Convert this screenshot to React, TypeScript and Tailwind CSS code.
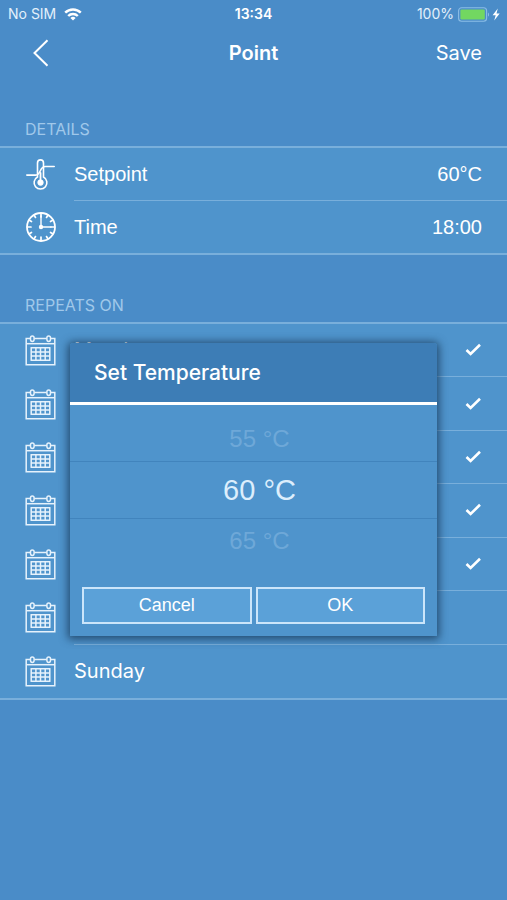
import { useState } from "react";

const UI = "font-['Inter',sans-serif]";
const LINE = "border-[#79afdb]";

function WifiIcon() {
  return (
    <svg width="18" height="13" viewBox="0 0 18 13" fill="none" stroke="#fff" strokeWidth="2.4" aria-hidden="true">
      <path d="M1.2 4.7a11 11 0 0 1 15.6 0" />
      <path d="M4.2 8a6.8 6.8 0 0 1 9.6 0" />
      <path d="M9 12.6 6.4 10a3.7 3.7 0 0 1 5.2 0Z" fill="#fff" stroke="none" />
    </svg>
  );
}

function BatteryIcon() {
  return (
    <svg width="43" height="15" viewBox="0 0 43 15" fill="none" aria-hidden="true">
      <rect x="0.6" y="0.8" width="28" height="13.4" rx="3" stroke="#8bbde6" strokeWidth="1.1" />
      <rect x="2.4" y="2.6" width="24.4" height="9.8" rx="1.2" fill="#72d761" />
      <path d="M30 5.4c1.4.6 1.4 3.6 0 4.2Z" fill="#8bbde6" />
      <path d="M39.8 1.6 34.6 8.2h3.1l-1.5 5.2 5.500-6.900h-3.200Z" fill="#fff" />
    </svg>
  );
}

function ThermometerIcon() {
  return (
    <svg width="29" height="31" viewBox="0 0 29 31" fill="none" stroke="#fff" strokeWidth="1.6" strokeLinecap="round" aria-hidden="true">
      <path d="M11.500 18V3.900a3 3 0 0 1 6 0V18a6.400 6.400 0 1 1-6 0Z" />
      <path d="M14.500 14v9" strokeWidth="1.8" />
      <circle cx="14.500" cy="23.600" r="3.100" fill="#fff" stroke="none" />
      <path d="M.8 16.100h8.700c2.500 0 3.600-1.600 4.700-4.100s2.200-4.500 5.200-4.500h8.800" />
    </svg>
  );
}

function ClockIcon() {
  const ticks = Array.from({ length: 12 }, (_, i) => i * 30);
  return (
    <svg width="30" height="30" viewBox="0 0 30 30" fill="none" stroke="#fff" strokeLinecap="round" aria-hidden="true">
      <circle cx="15" cy="15" r="14" strokeWidth="1.8" />
      {ticks.map((angle) => (
        <path key={angle} d={angle % 90 === 0 ? "M15 1.500v3.500" : "M15 1.500v2.500"} strokeWidth="1.7" transform={`rotate(${angle} 15 15)`} />
      ))}
      <path d="M15 4v11h10" strokeWidth="1.4" />
      <circle cx="15" cy="15" r="2.200" fill="#fff" stroke="none" />
    </svg>
  );
}

function CalendarIcon() {
  return (
    <svg className="shrink-0" width="31" height="31" viewBox="0 0 31 31" fill="none" stroke="#e6f2fc" strokeWidth="1.5" aria-hidden="true">
      <path d="M5.300 3.500H1.200v26.300h28.600V3.500h-4M9.200 3.500h12.600" />
      <path d="M1.200 8.700h28.600" />
      <rect x="5.500" y="1" width="3.600" height="5.400" rx="1.800" />
      <rect x="21.900" y="1" width="3.600" height="5.400" rx="1.800" />
      <path d="M5.500 12.700h20M6.200 16.900h18.600M6.200 21.100h18.600M5.500 25.300h20M6.200 12.700v12.600M10.900 12.700v12.600M15.500 12.700v12.600M20.200 12.700v12.600M24.800 12.700v12.600" />
    </svg>
  );
}

function DetailRow({ icon, label, value, last }: { icon: React.ReactNode; label: string; value: string; last?: boolean }) {
  return (
    <li className="flex flex-1">
      <button type="button" className="flex w-full items-stretch pl-[26px] text-left">
        <span className="flex w-12 shrink-0 items-center">{icon}</span>
        <span className={`flex flex-1 items-center justify-between pr-[25px] ${last ? "" : `border-b ${LINE}`}`}>
          <span>{label}</span>
          <span>{value}</span>
        </span>
      </button>
    </li>
  );
}

function DayRow({ day, initial, last }: { day: string; initial: boolean; last: boolean }) {
  const [checked, setChecked] = useState(initial);
  return (
    <li className="flex flex-1">
      <label className="flex w-full items-stretch pl-[25px]">
        <span className="flex w-[49px] shrink-0 items-center">
          <CalendarIcon />
        </span>
        <span className={`flex flex-1 items-center justify-between pr-[25px] ${last ? "" : `border-b ${LINE}`}`}>
          <span className={UI}>{day}</span>
          <span className="grid place-items-center">
            <input
              type="checkbox"
              checked={checked}
              onChange={() => setChecked(!checked)}
              className="peer col-start-1 row-start-1 h-4 w-[18px] appearance-none"
            />
            <svg className="pointer-events-none invisible col-start-1 row-start-1 peer-checked:visible" width="18" height="16" viewBox="0 0 18 16" fill="none" stroke="#fff" strokeWidth="2.600" aria-hidden="true">
              <path d="m2.500 8 4.100 4L16 2.800" />
            </svg>
          </span>
        </span>
      </label>
    </li>
  );
}

function TemperatureDialog({ onClose }: { onClose: () => void }) {
  return (
    <div className="absolute inset-0 flex items-center justify-center px-[70px]">
      <div role="dialog" aria-labelledby="dialog-title" className="w-full max-w-[480px] rounded-t-[3px] bg-[#4f94cc] shadow-[0_1px_9px_2px_rgba(20,50,80,0.75)]">
        <h2 id="dialog-title" className={`rounded-t-[3px] border-b-[3px] border-white bg-[#3d7db6] px-6 pt-4 pb-[15px] text-[21px] leading-7 font-medium ${UI}`}>
          Set Temperature
        </h2>
        <div role="listbox" aria-label="Temperature" className="flex flex-col pt-3">
          <button type="button" role="option" aria-selected="false" className="h-11 pl-3 text-[24px] leading-6 text-[#6ea8d8]">
            55 °C
          </button>
          <button type="button" role="option" aria-selected="true" className="h-[58px] border-y border-[#4184bd] pl-3 text-[29px] leading-8 text-[#dceefc]">
            60 °C
          </button>
          <button type="button" role="option" aria-selected="false" className="h-11 pl-3 text-[24px] leading-6 text-[#6ea8d8]">
            65 °C
          </button>
        </div>
        <div className="flex gap-1 px-3 pt-6 pb-3 text-[18px]">
          <button type="button" onClick={onClose} className="h-[37px] flex-1 border-2 border-[#cbe5fa] bg-[#5ba1d8]">
            Cancel
          </button>
          <button type="button" onClick={onClose} className="h-[37px] flex-1 border-2 border-[#cbe5fa] bg-[#5ba1d8]">
            OK
          </button>
        </div>
      </div>
    </div>
  );
}

const DAYS = ["Monday", "Tuesday", "Wednesday", "Thursday", "Friday", "Saturday", "Sunday"];

export default function App() {
  const [open, setOpen] = useState(true);
  return (
    <div className="flex min-h-screen flex-col bg-[#4a8cc8] font-['Liberation_Sans',Arial,sans-serif] text-[20px] leading-6 text-white">
      <div className={`grid h-7 grid-cols-3 items-center px-[6px] text-[14px] ${UI}`}>
        <div className="flex items-center gap-2 pl-[2px] text-[#e3f0fb]">
          <span>No SIM</span>
          <WifiIcon />
        </div>
        <div className="text-center font-semibold">13:34</div>
        <div className="flex items-center justify-end gap-1 text-[#e3f0fb]">
          <span>100%</span>
          <BatteryIcon />
        </div>
      </div>

      <header className={`grid h-[50px] grid-cols-3 items-center px-[25px] ${UI}`}>
        <button type="button" aria-label="Back" className="w-8 pl-2">
          <svg width="16" height="28" viewBox="0 0 16 28" fill="none" stroke="#fff" strokeWidth="2" aria-hidden="true">
            <path d="M14.500 1.200 1.500 14l13 12.800" />
          </svg>
        </button>
        <h1 className="text-center font-semibold">Point</h1>
        <button type="button" className="justify-self-end">
          Save
        </button>
      </header>

      <main className="relative flex-1">
        <h2 className={`px-[25px] pt-[41px] pb-[7px] text-[16px] leading-5 text-[#a0c8ea] ${UI}`}>DETAILS</h2>
        <ul className={`flex min-h-[109px] flex-col border-y-2 bg-[#4f94cc] ${LINE}`}>
          <DetailRow icon={<ThermometerIcon />} label="Setpoint" value="60°C" />
          <DetailRow icon={<ClockIcon />} label="Time" value="18:00" last />
        </ul>

        <h2 className={`px-[25px] pt-10 pb-[7px] text-[16px] leading-5 text-[#a0c8ea] ${UI}`}>REPEATS ON</h2>
        <ul className={`flex min-h-[378px] flex-col border-y-2 bg-[#4f94cc] ${LINE}`}>
          {DAYS.map((day, i) => (
            <DayRow key={day} day={day} initial={i < 5} last={i === DAYS.length - 1} />
          ))}
        </ul>

        {open && <TemperatureDialog onClose={() => setOpen(false)} />}
      </main>
    </div>
  );
}
